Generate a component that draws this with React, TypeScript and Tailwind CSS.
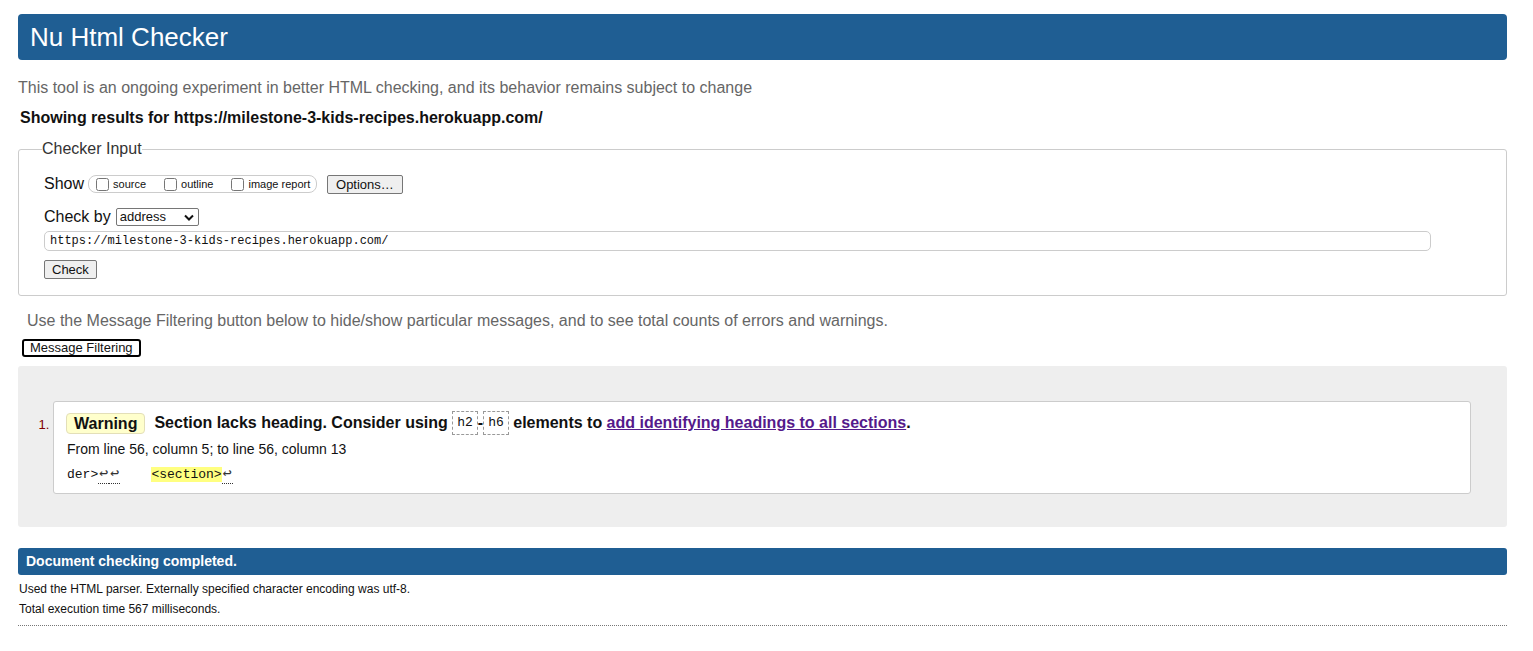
import { type ReactNode } from "react";

// Nu Html Checker result page, single warning

function Code({ children }: { children: ReactNode }) {
  return (
    <code className="inline-block border border-dashed border-[#999] px-[4px] font-['Liberation_Mono',monospace] text-[13px] font-normal leading-[22px] align-middle">
      {children}
    </code>
  );
}

function Lf() {
  return (
    <span className="inline-block w-[11px] border-b border-dotted border-[#333] text-center text-[15px] leading-[17px] text-[#333]">↩</span>
  );
}

function Checkbox({ label }: { label: string }) {
  return (
    <label className="flex shrink-0 items-center gap-[4px] whitespace-nowrap">
      <input type="checkbox" className="m-0 h-[13px] w-[13px]" />
      <span className="text-[11px]">{label}</span>
    </label>
  );
}

export default function App() {
  return (
    <div className="min-h-screen bg-white pl-[18px] pr-[26px] pt-[14px] font-['Liberation_Sans',Arial,sans-serif] text-[#111]">
      <header className="flex h-[46px] items-center rounded-[4px] bg-[#1f5e93] px-[12px] text-[26px] text-white">
        Nu Html Checker
      </header>

      <p className="mt-[18px] text-[16px] leading-[20px] text-[#666]">
        This tool is an ongoing experiment in better HTML checking, and its behavior remains subject to change
      </p>
      <p className="ml-[2px] mt-[10px] text-[16px] font-bold leading-[20px]">
        Showing results for https://milestone-3-kids-recipes.herokuapp.com/
      </p>

      <fieldset className="mt-[12px] rounded-[3px] border border-[#ccc] pb-[16px] pl-[25px] pr-[75px] pt-[16px]">
        <legend className="-ml-[2px] text-[16px] leading-[18px] text-[#333]">Checker Input</legend>

        <div className="flex h-[20px] items-center">
          <span className="text-[16px]">Show</span>
          <div className="ml-[4px] flex h-[18px] w-[229px] shrink-0 items-center gap-[18px] rounded-[8px] border border-[#ccc] pl-[7px]">
            <Checkbox label="source" />
            <Checkbox label="outline" />
            <Checkbox label="image report" />
          </div>
          <button className="ml-[10px] h-[19px] rounded-[2px] border border-[#767676] bg-[#efefef] px-[8px] text-[13px] leading-[17px]">
            Options…
          </button>
        </div>

        <div className="mt-[14px] flex h-[18px] items-center">
          <span className="text-[16px]">Check by</span>
          <div className="ml-[5px] flex h-[18px] w-[83px] items-center justify-between rounded-[2px] border border-[#767676] bg-white pl-[3px] pr-[4px] text-[13px]">
            <span>address</span>
            <svg width="10" height="7" viewBox="0 0 10 7" fill="none">
              <polyline points="1,1.5 5,5.5 9,1.5" stroke="#111" strokeWidth="2" />
            </svg>
          </div>
        </div>

        <div className="mt-[5px] flex h-[20px] items-center rounded-[5px] border border-[#ccc] pl-[5px] font-['Liberation_Mono',monospace] text-[12px]">
          https://milestone-3-kids-recipes.herokuapp.com/
        </div>

        <button className="mt-[9px] block h-[19px] rounded-[2px] border border-[#767676] bg-[#efefef] px-[7px] text-[13px] leading-[17px]">
          Check
        </button>
      </fieldset>

      <p className="ml-[9px] mt-[15px] text-[16px] leading-[20px] text-[#666]">
        Use the Message Filtering button below to hide/show particular messages, and to see total counts of errors and warnings.
      </p>
      <button className="ml-[4px] mt-[8px] block h-[18px] rounded-[3px] border-2 border-black bg-white px-[6px] text-[13px] leading-[14px]">
        Message Filtering
      </button>

      <div className="mt-[9px] rounded-[3px] bg-[#eee] pb-[33px] pl-[35px] pr-[36px] pt-[35px]">
        <ol className="list-decimal">
          <li className="rounded-[3px] border border-[#ccc] bg-white pb-[8px] pl-[12px] pt-[9px] marker:text-[13px] marker:text-[#800000]">
            <div className="flex h-[24px] items-center text-[16px] font-bold">
              <span className="rounded-[4px] border border-[#e3dfb8] bg-[#ffffcc] px-[7px] leading-[19px]">Warning</span>
              <span className="ml-[9px]">Section lacks heading. Consider using&nbsp;</span>
              <Code>h2</Code>
              <span>-</span>
              <Code>h6</Code>
              <span>&nbsp;elements to&nbsp;</span>
              <a href="#" className="text-[#551a8b] underline">add identifying headings to all sections</a>
              <span>.</span>
            </div>
            <p className="ml-[1px] mt-[4px] text-[14px] leading-[20px]">From line 56, column 5; to line 56, column 13</p>
            <p className="ml-[1px] mt-[6px] whitespace-pre font-['Liberation_Mono',monospace] text-[13px] leading-[20px]">
              der&gt;<Lf /><Lf />{"    "}<mark className="bg-[#ffff80] text-[#111]">&lt;section&gt;</mark><Lf />
            </p>
          </li>
        </ol>
      </div>

      <div className="mt-[21px] flex h-[27px] items-center rounded-[3px] bg-[#1f5e93] pl-[8px] text-[14px] font-bold text-white">
        Document checking completed.
      </div>
      <p className="ml-[1px] mt-[4px] text-[12px] leading-[20px]">
        Used the HTML parser. Externally specified character encoding was utf-8.
      </p>
      <p className="ml-[1px] text-[12px] leading-[20px]">Total execution time 567 milliseconds.</p>
      <div className="mt-[6px] border-b border-dotted border-[#777]" />
    </div>
  );
}
